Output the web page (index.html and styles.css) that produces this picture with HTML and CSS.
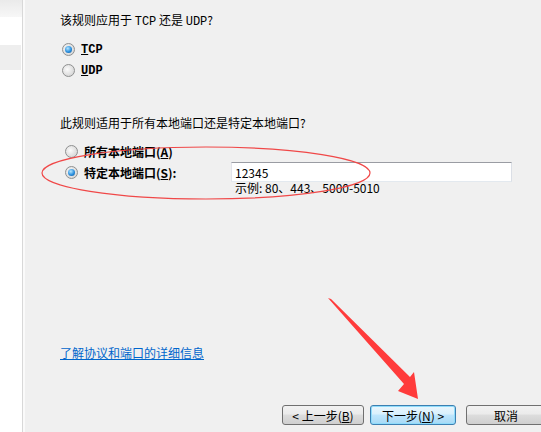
FILE: index.html
```html
<!DOCTYPE html>
<html lang="zh-CN">
<head>
    <meta charset="UTF-8">
    <title>端口规则向导</title>
    <link rel="stylesheet" href="styles.css">
</head>
<body>
    <div class="page">
        <aside class="sidebar">
            <div class="side-head"></div>
            <div class="side-row"></div>
        </aside>

        <main class="main">
            <p class="question">该规则应用于 <span class="mono">TCP</span> 还是 <span class="mono">UDP</span>?</p>
            <div class="proto-group">
                <label class="opt">
                    <span class="radio checked"></span>
                    <span class="opt-text mono-bold"><u>T</u>CP</span>
                </label>
                <label class="opt">
                    <span class="radio"></span>
                    <span class="opt-text mono-bold"><u>U</u>DP</span>
                </label>
            </div>

            <p class="question q2">此规则适用于所有本地端口还是特定本地端口?</p>
            <div class="port-group">
                <label class="opt port-opt">
                    <span class="radio"></span>
                    <span class="opt-text bold">所有本地端口(<u>A</u>)</span>
                </label>
                <div class="opt port-opt port-row">
                    <span class="radio checked"></span>
                    <span class="opt-text bold port-label">特定本地端口(<u>S</u>):</span>
                    <input class="port-input" type="text" value="12345">
                </div>
                <div class="example">示例: 80、443、5000-5010</div>
            </div>

            <a class="help-link" href="#">了解协议和端口的详细信息</a>

            <div class="buttons">
                <button class="btn">&lt; 上一步(<u>B</u>)</button>
                <button class="btn primary">下一步(<u>N</u>) &gt;</button>
                <button class="btn cancel">取消</button>
            </div>
        </main>
    </div>

    <!-- annotation drawn on top of the screenshot -->
    <svg class="marks" width="541" height="432" viewBox="0 0 541 432">
        <ellipse cx="206" cy="173" rx="164" ry="26" fill="none" stroke="#f04848" stroke-width="1.2"/>
        <polygon points="328,298 331,299 410,377 414,372 418,399 398,391 404,384" fill="#ff3b3b"/>
    </svg>
</body>
</html>
```

FILE: styles.css
```css
body {
    margin: 0;
    font-family: "Noto Sans CJK SC", "Liberation Sans", sans-serif;
    font-size: 12px;
    color: #000;
    background-color: #f0f0f0;
    overflow: hidden;
}

.page {
    display: flex;
    height: 432px;
}

.sidebar {
    width: 22px;
    background-color: #fff;
    border-right: 1px solid #d8d8d8;
    flex-shrink: 0;
}

.side-head {
    height: 17px;
    background: linear-gradient(#eaeaea, #f7f7f7);
}

.side-row {
    height: 25px;
    margin-top: 28px;
    margin-right: 1px;
    background-color: #eeeeee;
}

.main {
    flex: 1;
    display: flex;
    flex-direction: column;
    padding: 12px 0 0 35px;
    border-left: 2px solid #fafafa;
    min-width: 0;
}

.question {
    margin: 0;
    line-height: 16px;
    height: 16px;
}

.mono {
    font-family: "Liberation Mono", monospace;
    font-size: 12px;
}

.proto-group {
    margin-top: 11px;
    padding-left: 2px;
}

.opt {
    display: flex;
    align-items: center;
    height: 21px;
}

.radio {
    width: 11px;
    height: 11px;
    border-radius: 50%;
    border: 1px solid #8f9090;
    background: radial-gradient(circle at 40% 40%, #fbfbfb, #dadada 70%, #c8c8c8);
    position: relative;
    flex-shrink: 0;
}

.radio.checked::after {
    content: "";
    position: absolute;
    left: 2px;
    top: 2px;
    width: 7px;
    height: 7px;
    border-radius: 50%;
    background: radial-gradient(circle at 40% 35%, #b5e6ff, #2a8fde 55%, #0c4f8e);
}

.opt-text {
    margin-left: 6px;
}

.mono-bold {
    font-family: "Liberation Mono", monospace;
    font-size: 12px;
    font-weight: bold;
}

.bold {
    font-weight: bold;
}

.q2 {
    margin-top: 34px;
}

.port-group {
    margin-top: 10px;
    padding-left: 5px;
}

.port-row {
    height: 20px;
}

.port-label {
    width: 147px;
}

.port-input {
    box-sizing: border-box;
    width: 281px;
    height: 20px;
    margin: 0;
    padding: 0 3px;
    border: 1px solid #abadb3;
    border-top-color: #9a9ca3;
    border-left-color: #e2e3ea;
    border-right-color: #dbdfe6;
    border-bottom-color: #e3e9ef;
    font-family: "Noto Sans CJK SC", sans-serif;
    font-size: 12px;
    color: #000;
    background: #fff;
}

.example {
    margin-left: 170px;
    line-height: 12px;
    height: 12px;
}

.help-link {
    margin-top: 152px;
    align-self: flex-start;
    color: #0066cc;
    line-height: 14px;
    text-decoration: underline;
}

.buttons {
    display: flex;
    margin-top: auto;
    margin-bottom: 7px;
    padding-left: 222px;
    gap: 6px;
}

.btn {
    box-sizing: border-box;
    height: 20px;
    width: 82px;
    padding: 0;
    border: 1px solid #707070;
    border-radius: 3px;
    background: linear-gradient(#f2f2f2 0%, #ebebeb 45%, #dddddd 50%, #cfcfcf 100%);
    font-family: "Noto Sans CJK SC", sans-serif;
    font-size: 12px;
    color: #000;
    flex-shrink: 0;
}

.btn u {
    text-decoration: underline;
}

.btn.primary {
    width: 86px;
    border-color: #3c7fb1;
    background: linear-gradient(#eaf6fd 0%, #d9f0fc 45%, #bee6fd 50%, #a7d9f5 100%);
    box-shadow: inset 0 0 0 1px #8fdcfb;
}

.btn.cancel {
    width: 80px;
    margin-left: 4px;
}

.marks {
    position: absolute;
    left: 0;
    top: 0;
    pointer-events: none;
}
```
